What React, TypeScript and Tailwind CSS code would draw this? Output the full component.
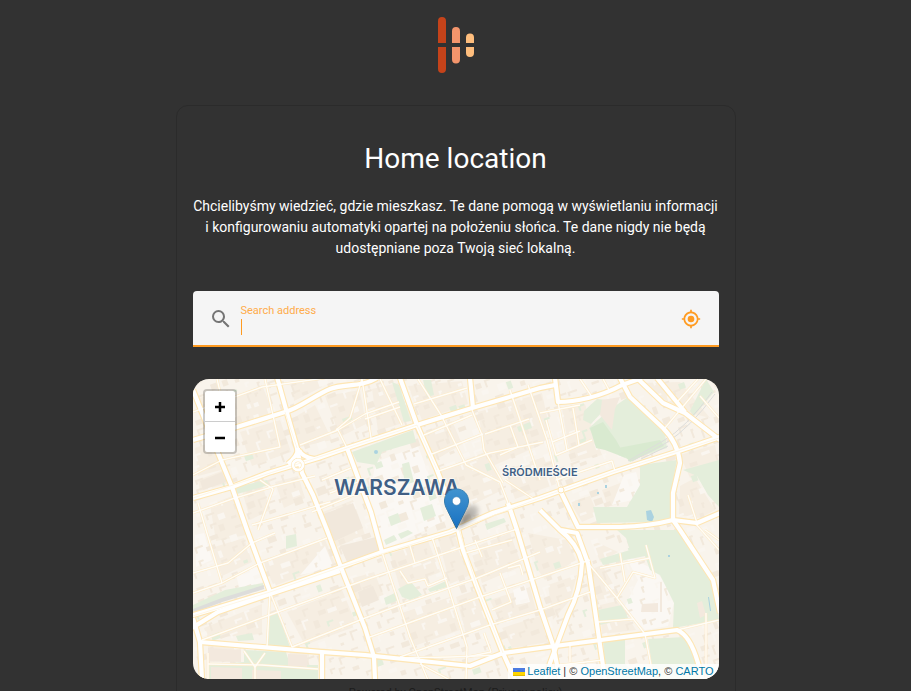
import React from "react";

const MAGNIFY =
  "M9.5,3A6.5,6.5 0 0,1 16,9.5C16,11.11 15.41,12.59 14.44,13.73L14.71,14H15.5L20.5,19L19,20.5L14,15.5V14.71L13.73,14.44C12.59,15.41 11.11,16 9.5,16A6.5,6.5 0 0,1 3,9.5A6.5,6.5 0 0,1 9.5,3M9.5,5C7,5 5,7 5,9.5C5,12 7,14 9.5,14C12,14 14,12 14,9.5C14,7 12,5 9.5,5Z";
const CROSSHAIRS =
  "M12,8A4,4 0 0,1 16,12A4,4 0 0,1 12,16A4,4 0 0,1 8,12A4,4 0 0,1 12,8M3.05,13H1V11H3.05C3.5,6.83 6.83,3.5 11,3.05V1H13V3.05C17.17,3.5 20.5,6.83 20.95,11H23V13H20.95C20.5,17.17 17.17,20.5 13,20.95V23H11V20.95C6.83,20.5 3.5,17.17 3.05,13M12,5A7,7 0 0,0 5,12A7,7 0 0,0 12,19A7,7 0 0,0 19,12A7,7 0 0,0 12,5Z";

const BLOCKS = [
  "195,400 215,392 225,425 205,432",
  "227,400 262,385 273,412 240,424",
  "240,432 280,420 291,452 252,466",
  "195,448 212,442 221,470 198,476",
  "198,480 224,470 229,483 200,491",
  "210,505 232,496 246,535 216,541",
  "242,490 262,484 270,510 250,520",
  "275,482 298,476 305,498 284,508",
  "292,384 318,379 322,387 294,401",
  "290,420 315,405 332,440 300,447",
  "325,396 360,390 366,424 340,437",
  "372,389 399,383 412,420 378,431",
  "408,386 462,381 468,404 422,420",
  "424,432 452,421 462,444 434,461",
  "440,470 490,450 502,490 456,513",
  "478,412 542,393 552,440 488,468",
  "562,408 585,404 594,434 602,455 571,462",
  "505,470 550,455 556,484 515,499",
  "318,514 353,500 365,535 334,548",
  "340,545 380,540 385,551 347,560",
  "347,580 374,572 384,596 356,608",
  "211,548 244,538 252,562 222,576",
  "262,560 325,540 335,563 274,586",
  "204,628 262,604 262,634 208,638",
  "287,612 342,590 357,626 305,645",
  "208,646 241,648 241,661 208,662",
  "208,666 318,666 318,679 208,679",
  "290,651 309,652 309,665 288,664",
  "390,554 428,541 440,572 400,588",
  "438,538 454,534 470,575 450,584",
  "402,613 450,597 460,630 414,646",
  "456,597 476,590 488,624 466,634",
  "470,549 510,533 522,566 482,583",
  "490,600 530,587 536,610 500,622",
  "502,628 540,616 548,642 512,648",
  "528,533 567,540 576,560 545,580 538,570",
  "548,585 577,575 570,600 553,620",
  "592,540 618,552 600,562",
  "590,570 602,565 620,596 598,600",
  "600,605 617,601 636,630 602,634",
  "570,502 590,496 598,515 582,522",
  "602,490 628,480 638,497 608,507",
  "640,383 680,382 710,418 690,413 665,400",
  "680,455 715,445 719,465 690,478",
  "680,486 695,478 715,510 700,518 679,515",
];

const PARKS = [
  "352,452 413,430 416,442 382,452 376,465 357,462",
  "628,397 665,433 667,448 630,460 618,455 616,445 600,448 589,428 608,411",
  "584,411 597,399 606,400 604,410 591,424 583,420",
  "640,465 677,460 671,493 673,518 650,522 597,523 593,507 627,507 640,485",
  "683,470 719,460 719,507 708,495 697,476",
  "617,530 679,530 713,580 719,620 673,628 674,603 660,575 650,570 645,556 625,560 603,565 600,559 630,550 626,538",
  "603,641 625,639 625,664 640,679 606,679",
  "648,639 685,637 697,655 701,679 654,679",
  "598,610 622,605 628,618 600,625",
  "268,617 278,613 290,647 267,646",
  "244,650 286,652 290,665 318,665 318,679 208,679 208,665 244,662",
  "235,487 267,480 269,485 237,494",
  "193,605 225,590 263,583 263,588 193,610",
  "384,540 394,535 397,540 386,545",
  "398,534 408,530 413,533 401,539",
  "398,589 411,582 422,595 410,600 402,597",
  "428,589 446,581 447,587 430,592",
  "384,598 397,592 399,600 386,605",
  "392,382 399,385 411,421 404,422",
  "286,536 296,534 297,546 286,549",
  "236,636 252,633 254,640 238,641",
  "402,464 409,462 414,482 405,485",
  "388,517 398,513 401,522 391,526",
  "420,508 432,504 436,516 424,521",
  "427,492 434,490 437,498 430,501",
  "485,524 504,518 506,522 487,530",
  "423,380 431,380 434,395 427,397",
  "517,427 530,422 532,428 519,432",
  "706,379 714,392 694,416 690,411",
];

const DARK_PARKS = ["590,428 603,422 616,440 626,458 605,450 596,448", "618,448 660,440 664,446 630,462"];

const COMMONS = [
  "376,462 418,446 446,520 384,550 366,510",
  "325,546 300,575 334,568",
  "195,535 204,533 212,560 196,567",
  "236,575 264,562 268,580 240,590",
  "625,555 655,570 665,583 674,603 668,626 645,630 624,608 638,580",
  "640,540 656,538 655,547 646,550",
  "513,590 525,585 530,602 516,605",
  "624,475 636,472 640,486 632,500 612,505",
];

const MAJOR = [
  "M277,377L287,413L297,448L302,473L313,495L327,530L342,570L365,628L374,657L375,680",
  "M193,440L237,427L285,412C300,408 315,395 330,389S360,388 377,378",
  "M193,498L232,487L268,473L318,458L347,448L417,425L472,408L540,388L555,385",
  "M400,378L417,425L437,470L455,517L463,550L477,587L503,653L515,680",
  "M190,616L270,592L338,568L382,552L450,532L493,513L540,498L613,472L673,453L720,437",
  "M190,629L218,612L270,594L340,571",
  "M193,390L205,420L218,453L232,487L247,530L270,592",
  "M470,378L473,408",
  "M555,378L558,402C575,402 600,397 622,385L642,378",
  "M620,378L630,397L663,428Q678,443 680,463L673,493V520L680,530L713,580L720,613",
  "M637,378L663,403L685,413L720,440",
  "M657,378L685,412",
  "M347,448L357,475L371,512L382,552",
  "M560,490L578,527H620Q650,526 673,520L697,523L720,513",
  "M508,503L517,530L540,607L553,645L560,680",
  "M540,510L560,530Q577,543 582,562Q581,590 568,615L550,663L545,680",
  "M561,530L577,533L588,563L595,610L605,680",
  "M193,618L200,642L202,680",
  "M200,642L322,652L365,655L470,666L503,653L540,648L677,630Q690,635 698,663L703,680",
  "M322,653V680",
  "M298,448Q298,456 288,464M299,450Q302,457 314,459",
];

const MINOR = [
  "M198,503L206,530L222,583", "M217,379L222,400", "M193,475L222,460L280,447L265,379",
  "M193,412L262,387L325,378", "M193,513L232,499L275,486L315,476", "M260,480L273,489L258,530",
  "M252,525L330,502", "M300,445L338,430L365,414L399,402", "M337,428L347,448", "M362,379L350,418L336,430",
  "M362,379L371,438", "M365,419L400,407", "M380,379L402,425", "M414,404L467,388", "M418,379L441,415L466,465L500,482L508,503",
  "M424,435L472,415", "M432,454L483,434", "M436,472L490,453L543,442", "M472,410L482,435L484,450L503,483",
  "M485,434L529,419", "M510,425L518,447L500,455", "M505,480L535,500", "M510,390L540,480", "M528,385L547,440L560,490",
  "M540,413L580,405", "M558,402L567,450", "M546,420L556,455L592,440", "M573,408L579,445", "M552,442L580,431",
  "M556,480L612,461L615,471", "M580,379L592,397", "M603,379L609,390", "M665,428L706,379", "M678,401L698,379", "M700,396L719,418",
  "M193,593L222,583L260,563L327,538", "M193,573L228,563L252,543L275,533", "M202,640L275,613L365,580L463,547L517,529",
  "M292,647L365,618L400,605L477,578L540,552", "M370,637L480,597L540,577L590,560", "M400,657L490,625L540,610L590,592",
  "M270,592L267,647", "M270,592L292,647", "M382,552L410,637L428,680", "M432,537L450,593L467,647L466,680",
  "M410,546L415,563", "M400,571L408,583L425,579L428,586L447,578", "M475,540L482,557", "M500,573L511,602L492,610",
  "M508,568L520,565L523,575", "M465,553L512,540", "M467,657L491,652L484,633", "M398,658L450,657L503,655",
  "M588,563L617,598L645,634L651,665", "M600,568L650,558", "M620,553L625,582", "M617,598L633,572L655,578L646,545",
  "M598,622L633,619", "M545,679L560,665L603,660", "M677,630L719,620", "M706,613L706,679", "M697,523L688,495",
  "M695,523L719,550", "M705,530L719,540", "M208,664L262,665L318,669", "M244,651L255,667L265,653", "M255,667V679",
  "M208,653V679", "M312,512L366,490", "M330,493L358,482M322,480L351,468", "M420,664L450,680", "M570,645V662",
];

const CENTER_LINES =
  "M285,412L297,448M193,498L270,473L347,448L417,425M437,470L417,425M455,517L477,587L503,653M193,616L270,592L338,568L450,532L540,498L613,472L719,438";

function random(seed: number) {
  const v = Math.sin(seed * 127.1) * 43758.5453;
  return v - Math.floor(v);
}

// Small building footprints, turned to follow the street grid.
const BUILDINGS = Array.from({ length: 1100 }, (_, i) => {
  const col = i % 44;
  const row = Math.floor(i / 44);
  const w = 3 + random(i + 5) * 7;
  const h = 2 + random(i + 900) * 6;
  return {
    x: 193 + col * 12 + random(i + 1) * 6,
    y: 379 + row * 12 + random(i + 300) * 6,
    d: random(i + 77) > 0.5 ? `M0,0h${w}v${h}h${-w}z` : `M0,0h${w}v2h${2 - w}v${h}h-2z`,
    fill: random(i + 40) > 0.95 ? "#e4eedb" : random(i + 60) > 0.35 ? "#f2e9dc" : "#faf6f0",
  };
});

function CityMap() {
  return (
    <svg className="block h-full w-full" viewBox="193 379 526 300" preserveAspectRatio="xMidYMid slice" role="img" aria-label="Warszawa">
      <defs>
        <linearGradient id="pin" x1="0" y1="0" x2="0" y2="1">
          <stop offset="0" stopColor="#4294cf" />
          <stop offset="1" stopColor="#1871c2" />
        </linearGradient>
        <linearGradient id="pin-edge" x1="0" y1="0" x2="0" y2="1">
          <stop offset="0" stopColor="#3883b7" />
          <stop offset="1" stopColor="#2e6c97" />
        </linearGradient>
        <linearGradient id="pin-shadow" x1="0" y1="1" x2="1" y2="0">
          <stop offset="0" stopColor="#000000" stopOpacity="0.55" />
          <stop offset="1" stopColor="#000000" stopOpacity="0.12" />
        </linearGradient>
        <filter id="soft" x="-50%" y="-50%" width="200%" height="200%">
          <feGaussianBlur stdDeviation="2" />
        </filter>
      </defs>
      <rect x="193" y="379" width="526" height="300" fill="#f9f4ec" />
      {BLOCKS.map((p) => (
        <polygon key={p} points={p} fill="#f6eee2" />
      ))}
      {COMMONS.map((p) => (
        <polygon key={p} points={p} fill="#fbf8f4" />
      ))}
      {BUILDINGS.map((b, i) => (
        <path key={i} d={b.d} fill={b.fill} transform={`translate(${b.x} ${b.y}) rotate(-20)`} />
      ))}
      <g fill="#f1e8dc">
        <polygon points="321,515 353,503 363,528 335,541" />
        <polygon points="340,546 380,536 384,551 347,562" />
        <polygon points="358,592 373,586 379,600 362,607" />
        <polygon points="200,481 222,472 226,482 203,490" />
      </g>
      {PARKS.map((p) => (
        <polygon key={p} points={p} fill="#e4eedb" />
      ))}
      {DARK_PARKS.map((p) => (
        <polygon key={p} points={p} fill="#d9ead0" />
      ))}
      <g fill="#f3e9de">
        <polygon points="208,648 241,650 241,662 208,661" />
        <polygon points="211,667 242,668 242,679 211,679" />
        <polygon points="252,670 281,671 281,679 252,679" />
        <polygon points="288,654 307,655 307,667 288,666" />
        <polygon points="642,604 658,603 658,612 641,612" />
        <polygon points="660,582 662,582 662,612 660,612" />
        <polygon points="602,400 620,397 615,409 612,430 600,415" />
        <polygon points="697,603 702,601 706,615 700,618" />
      </g>
      <g fill="none" stroke="#dddddb">
        <path d="M193,610L222,599L264,586M193,612L222,601L264,588" strokeWidth="2" />
        <path d="M628,461L663,441Q686,428 712,392M632,461L666,443Q690,428 715,394M641,459L668,446" />
      </g>
      <g fill="#aad2e0">
        <ellipse cx="376" cy="452" rx="2" ry="2" />
        <path d="M646,511l5,-1l3,7l-2,5l-5,-2z" />
        <path d="M605,485h2v3h-2zM578,503h2v3h-2zM597,492h2v2h-2zM668,555h2v2h-2zM708,597h1l2,14h-1z" />
      </g>
      <g fill="none" strokeLinejoin="round">
        {MINOR.map((d) => (
          <path key={d} d={d} stroke="#fdebc8" strokeWidth="2.6" />
        ))}
        {MAJOR.map((d) => (
          <path key={d} d={d} stroke="#fee6b4" strokeWidth="6.4" />
        ))}
        {MINOR.map((d) => (
          <path key={d} d={d} stroke="#fffdf8" strokeWidth="1.4" />
        ))}
        {MAJOR.map((d) => (
          <path key={d} d={d} stroke="#ffffff" strokeWidth="4.2" />
        ))}
        <path d={CENTER_LINES} stroke="#fff3da" strokeWidth="0.7" />
        <circle cx="298" cy="465" r="5" stroke="#fee6b4" strokeWidth="4" />
        <circle cx="298" cy="465" r="5" stroke="#ffffff" strokeWidth="2.8" />
        <circle cx="561" cy="490" r="3" stroke="#fee6b4" fill="#ffffff" />
      </g>
      <g
        className="font-['Inter',sans-serif] font-semibold"
        fill="#405f85"
        stroke="#ffffff"
        strokeOpacity="0.6"
        strokeWidth="2"
        paintOrder="stroke"
      >
        <text x="334" y="495" fontSize="21">WARSZAWA</text>
        <text x="502" y="476" fontSize="11">ŚRÓDMIEŚCIE</text>
      </g>
      <path d="M457,528L465,510Q473,501 478,507Q481,514 472,520Z" fill="url(#pin-shadow)" filter="url(#soft)" />
      <path
        d="M456.500,489C449.500,489 444.500,494.500 444.500,501C444.500,504.500 446,507.500 447.500,510.500L456.500,528.500L465.500,510.500C467,507.500 468.500,504.500 468.500,501C468.500,494.500 463.500,489 456.500,489Z"
        fill="url(#pin)"
        stroke="url(#pin-edge)"
      />
      <circle cx="456.500" cy="501" r="4.2" fill="#ffffff" stroke="#3477aa" strokeWidth="0.5" />
    </svg>
  );
}

function Logo() {
  return (
    <svg className="h-14 w-9" viewBox="0 0 36 56" role="img" aria-label="Logo">
      <path fill="#c5431a" d="M0,26V4a4,4 0 0 1 8,0V26zM0,30V52a4,4 0 0 0 8,0V30z" />
      <path fill="#f4956c" d="M14,26V14a4,4 0 0 1 8,0V26zM14,30V42.500a4,4 0 0 0 8,0V30z" />
      <path fill="#ffbe7d" d="M28,26V20.500a4,4 0 0 1 8,0V26zM28,30V36a4,4 0 0 0 8,0V30z" />
    </svg>
  );
}

export default function App() {
  return (
    <div className="h-screen overflow-hidden bg-[#323232] px-4 pt-[17px] font-['Roboto',sans-serif] text-white">
      <header className="mb-8 flex justify-center">
        <Logo />
      </header>
      <main className="mx-auto max-w-[560px] rounded-xl border border-[#2b2b2b] px-4 pt-8 pb-8">
        <h1 className="text-center text-[28px] leading-[42px]">Home location</h1>
        <p className="mt-4 text-center text-sm leading-[21px]">
          Chcielibyśmy wiedzieć, gdzie mieszkasz. Te dane pomogą w wyświetlaniu informacji i konfigurowaniu automatyki
          opartej na położeniu słońca. Te dane nigdy nie będą udostępniane poza Twoją sieć lokalną.
        </p>
        <div className="mt-8 flex h-14 items-center rounded-t bg-[#f5f5f5] px-4 shadow-[inset_0_-2px_0_#ff9b21]">
          <svg className="mr-2 h-6 w-6 shrink-0" viewBox="0 0 24 24" fill="#757575" aria-hidden="true">
            <path d={MAGNIFY} />
          </svg>
          <div className="relative flex min-w-0 flex-1 flex-col pt-1">
            <label htmlFor="address" className="text-[11px] leading-3 text-[#ffac4b]">
              Search address
            </label>
            <input
              id="address"
              type="text"
              autoComplete="off"
              className="h-5 w-full bg-transparent text-base text-[#212121] caret-transparent outline-none"
            />
            <span className="pointer-events-none absolute bottom-0.5 left-0 h-4 w-px bg-[#ff9b21]" aria-hidden="true" />
          </div>
          <button type="button" aria-label="Detect location" className="flex h-6 w-6 items-center justify-center">
            <svg className="h-5 w-5" viewBox="0 0 24 24" fill="#ff9b21" aria-hidden="true">
              <path d={CROSSHAIRS} />
            </svg>
          </button>
        </div>
        <div className="relative mt-8 h-[300px] overflow-hidden rounded-2xl">
          <CityMap />
          <div className="absolute top-2.5 left-2.5 flex flex-col rounded border-2 border-black/20 bg-white bg-clip-padding text-black">
            <button
              type="button"
              aria-label="Zoom in"
              className="flex h-[31px] w-[30px] items-center justify-center border-b border-[#cccccc] pt-px"
            >
              <svg className="h-3 w-3" viewBox="0 0 12 12" stroke="currentColor" strokeWidth="2.500" aria-hidden="true">
                <path d="M1,6H11M6,1V11" />
              </svg>
            </button>
            <button type="button" aria-label="Zoom out" className="flex h-[30px] w-[30px] items-center justify-center pt-px">
              <svg className="h-3 w-3" viewBox="0 0 12 12" stroke="currentColor" strokeWidth="2.500" aria-hidden="true">
                <path d="M1,6H11" />
              </svg>
            </button>
          </div>
          <div className="absolute right-0 bottom-0 flex items-center bg-white/80 px-[5px] font-['Liberation_Sans',Arial,sans-serif] text-[11px] leading-[15px] text-[#333333]">
            <a href="#leaflet" className="flex items-center gap-0.5 text-[#0078a8]">
              <svg className="h-2 w-3" viewBox="0 0 12 8" aria-hidden="true">
                <path fill="#4c7be1" d="M0,0h12v4H0z" />
                <path fill="#ffd500" d="M0,4h12v3H0z" />
                <path fill="#e0bc00" d="M0,7h12v1H0z" />
              </svg>
              Leaflet
            </a>
            <span className="whitespace-pre">
              {" | © "}
              <a href="#osm" className="text-[#0078a8]">OpenStreetMap</a>
              {", © "}
              <a href="#carto" className="text-[#0078a8]">CARTO</a>
            </span>
          </div>
        </div>
        <p className="mt-1.5 text-center text-[11px] leading-4 text-[#1c1c1c]">
          Powered by OpenStreetMap (<a href="#privacy">Privacy policy</a>)
        </p>
      </main>
    </div>
  );
}
